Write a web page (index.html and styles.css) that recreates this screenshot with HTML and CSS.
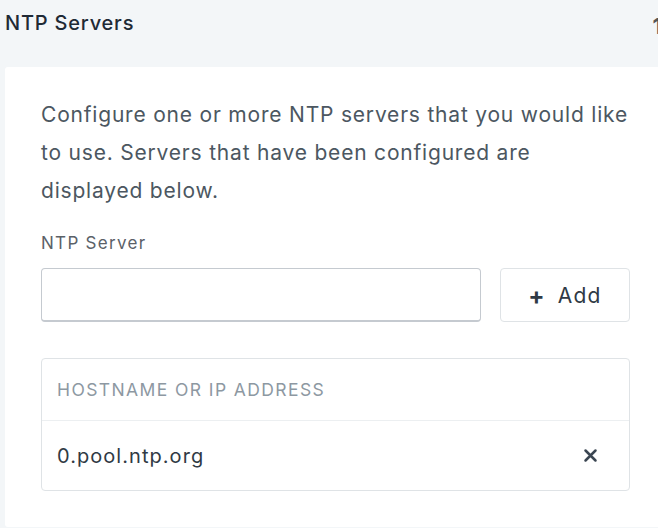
FILE: index.html
```html
<!DOCTYPE html>
<html>
<head>
<meta charset="utf-8">
<link rel="stylesheet" href="styles.css">
</head>
<body>
<div class="page">
  <div class="header">
    <h1 class="title">NTP Servers</h1>
    <span class="edge-icon">1</span>
  </div>
  <div class="card">
    <p class="desc">Configure one or more NTP servers that you would like to use. Servers that have been configured are displayed below.</p>
    <label class="label">NTP Server</label>
    <div class="form-row">
      <input class="input" type="text">
      <button class="btn"><span class="plus">+</span>Add</button>
    </div>
    <div class="table">
      <div class="thead">HOSTNAME OR IP ADDRESS</div>
      <div class="trow">
        <span class="host">0.pool.ntp.org</span>
        <svg class="remove" width="15" height="15" viewBox="0 0 15 15"><path d="M2.5 2.5 L12.5 12.5 M12.5 2.5 L2.5 12.5" stroke="#3b4652" stroke-width="2.5" stroke-linecap="round"/></svg>
      </div>
    </div>
  </div>
</div>
</body>
</html>
```
FILE: styles.css
```css
html, body {
  margin: 0;
  padding: 0;
  background: #f3f6f8;
  overflow: hidden;
}
.page {
  width: 658px;
  height: 528px;
  font-family: Inter, "Noto Sans", sans-serif;
}
.header {
  display: flex;
  justify-content: space-between;
  align-items: flex-start;
  height: 67px;
  padding-left: 5px;
}
.title {
  margin: 11px 0 0;
  font-size: 20px;
  line-height: 24px;
  font-weight: 500;
  letter-spacing: 0.8px;
  color: #1f2a35;
}
.edge-icon {
  margin-top: 14px;
  margin-right: -4px;
  font-size: 22px;
  line-height: 24px;
  font-weight: 700;
  color: #555;
}
.card {
  margin-left: 5px;
  background: #fff;
  border-radius: 3px 0 0 3px;
  height: 460px;
  padding: 29px 28px 0 36px;
  box-sizing: border-box;
}
.desc {
  margin: 0;
  width: 592px;
  font-size: 21px;
  line-height: 38px;
  letter-spacing: 0.8px;
  color: #4c5761;
}
.label {
  display: block;
  margin-top: 23px;
  font-size: 17px;
  line-height: 20px;
  letter-spacing: 1.3px;
  color: #5b6168;
}
.form-row {
  display: flex;
  gap: 19px;
  margin-top: 15px;
}
.input {
  width: 440px;
  height: 54px;
  box-sizing: border-box;
  border: 1.5px solid #c5cad0;
  border-bottom-width: 2px;
  border-radius: 4px;
  background: #fff;
  margin: 0;
}
.btn {
  width: 130px;
  height: 54px;
  box-sizing: border-box;
  border: 1.5px solid #dfe3e6;
  border-radius: 4px;
  background: #fff;
  font-family: Inter, sans-serif;
  font-size: 21px;
  letter-spacing: 1.2px;
  color: #2f3a45;
  display: flex;
  align-items: center;
  justify-content: center;
  padding: 0;
}
.plus {
  font-size: 24px;
  font-weight: 700;
  margin-right: 12px;
}
.table {
  margin-top: 36px;
  width: 589px;
  border: 1.5px solid #dfe3e6;
  border-radius: 4px;
  box-sizing: border-box;
}
.thead {
  height: 61px;
  display: flex;
  align-items: center;
  padding-left: 15px;
  font-size: 17.5px;
  letter-spacing: 1.4px;
  color: #8d98a2;
  border-bottom: 1px solid #eceff1;
}
.trow {
  height: 69px;
  display: flex;
  align-items: center;
  justify-content: space-between;
  padding: 0 31px 0 15px;
}
.host {
  font-size: 20px;
  letter-spacing: 1.05px;
  color: #303a44;
}
```
